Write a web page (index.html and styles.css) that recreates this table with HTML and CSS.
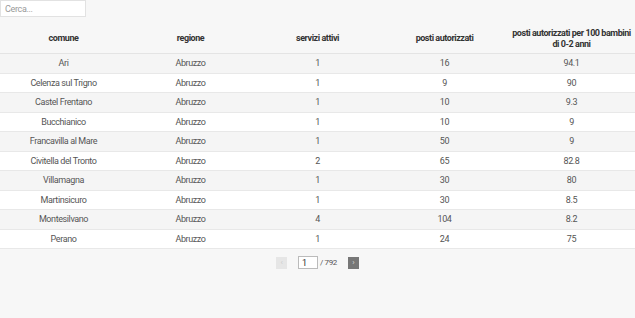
FILE: index.html
```html
<!DOCTYPE html>
<html lang="it">
<head>
<meta charset="utf-8">
<link rel="stylesheet" href="styles.css">
</head>
<body>
<div class="page">
  <input class="search" type="text" placeholder="Cerca...">
  <table class="data">
    <thead>
      <tr>
        <th>comune</th>
        <th>regione</th>
        <th>servizi attivi</th>
        <th>posti autorizzati</th>
        <th>posti autorizzati per 100 bambini<br>di 0-2 anni</th>
      </tr>
    </thead>
    <tbody>
      <tr><td>Ari</td><td>Abruzzo</td><td>1</td><td>16</td><td>94.1</td></tr>
      <tr><td>Celenza sul Trigno</td><td>Abruzzo</td><td>1</td><td>9</td><td>90</td></tr>
      <tr><td>Castel Frentano</td><td>Abruzzo</td><td>1</td><td>10</td><td>9.3</td></tr>
      <tr><td>Bucchianico</td><td>Abruzzo</td><td>1</td><td>10</td><td>9</td></tr>
      <tr><td>Francavilla al Mare</td><td>Abruzzo</td><td>1</td><td>50</td><td>9</td></tr>
      <tr><td>Civitella del Tronto</td><td>Abruzzo</td><td>2</td><td>65</td><td>82.8</td></tr>
      <tr><td>Villamagna</td><td>Abruzzo</td><td>1</td><td>30</td><td>80</td></tr>
      <tr><td>Martinsicuro</td><td>Abruzzo</td><td>1</td><td>30</td><td>8.5</td></tr>
      <tr><td>Montesilvano</td><td>Abruzzo</td><td>4</td><td>104</td><td>8.2</td></tr>
      <tr><td>Perano</td><td>Abruzzo</td><td>1</td><td>24</td><td>75</td></tr>
    </tbody>
  </table>
  <div class="pager">
    <button class="pbtn prev" type="button">&#8249;</button>
    <input class="pinput" type="text" value="1">
    <span class="ptotal">/ 792</span>
    <button class="pbtn next" type="button">&#8250;</button>
  </div>
</div>
</body>
</html>
```
FILE: styles.css
```css
html, body {
  margin: 0;
  padding: 0;
  background: #f7f7f7;
}
body {
  font-family: "Roboto", "Liberation Sans", sans-serif;
  font-size: 9px;
  letter-spacing: -0.4px;
  color: #555;
}
.page {
  display: flex;
  flex-direction: column;
}
.search {
  box-sizing: border-box;
  width: 86px;
  height: 17px;
  margin: 0;
  padding: 0 4px;
  border: 1px solid #e2e2e2;
  background: #fff;
  font-family: inherit;
  font-size: 9px;
  letter-spacing: -0.35px;
  color: #555;
  outline: none;
}
.search::placeholder { color: #999; }
.data {
  width: 100%;
  margin-top: 7px;
  border-collapse: collapse;
  table-layout: fixed;
}
.data th {
  font-weight: bold;
  color: #333;
  height: 29px;
  padding: 0 2px;
  line-height: 11px;
  letter-spacing: -0.45px;
  text-align: center;
  vertical-align: middle;
  border-bottom: 1px solid #e4e4e4;
}
.data td {
  text-align: center;
  height: 19.5px;
  padding: 1px 4px 0;
  line-height: 13px;
  border-bottom: 1px solid #e8e8e8;
  box-sizing: border-box;
}
.data tbody tr:nth-child(odd) { background: #f5f5f5; }
.data tbody tr:nth-child(even) { background: #fff; }
.pager {
  display: flex;
  align-items: center;
  justify-content: center;
  margin-top: 7px;
}
.pbtn {
  box-sizing: border-box;
  width: 11px;
  height: 12px;
  padding: 0;
  border: none;
  font-size: 8px;
  line-height: 12px;
  font-family: inherit;
}
.prev { background: #e6e6e6; color: #ccc; margin-right: 11px; }
.next { background: #777; color: #ddd; margin-left: 11px; }
.pinput {
  box-sizing: border-box;
  width: 20px;
  height: 13px;
  margin: 0;
  padding: 0 3px;
  border: 1px solid #bbb;
  background: #fff;
  font-family: inherit;
  font-size: 9px;
  color: #333;
}
.ptotal {
  margin-left: 2px;
  font-size: 8px;
  color: #555;
}
```
